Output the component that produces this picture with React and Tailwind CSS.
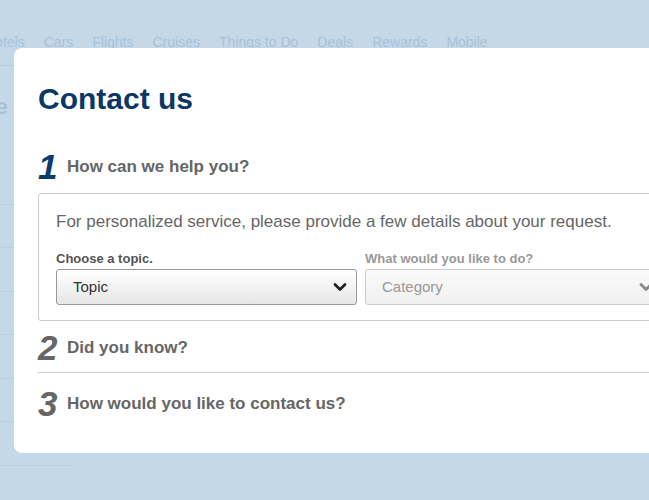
import React from 'react'

const navLinks = ['Hotels', 'Cars', 'Flights', 'Cruises', 'Things to Do', 'Deals', 'Rewards', 'Mobile']

const Chevron = ({ className }) => (
  <svg viewBox="0 0 14 10" className={className} fill="none">
    <path d="M2 2.5 L7 7.5 L12 2.5" stroke="currentColor" strokeWidth="2.8" strokeLinecap="round" strokeLinejoin="round" />
  </svg>
)

const Step = ({ num, title, active }) => (
  <div className="flex items-center h-[44px]">
    <span
      className={
        'w-[29px] italic font-bold text-[35px] leading-none ' +
        (active ? 'text-[#0c3a6b]' : 'text-[#666]')
      }
    >
      {num}
    </span>
    <span className="text-[17px] font-bold text-[#666] pt-[2px]">{title}</span>
  </div>
)

const App = () => {
  return (
    <div className="relative w-full h-[500px] overflow-hidden bg-[#c5d8e8] font-['Liberation_Sans',Arial,sans-serif]">
      {/* page behind the dialog */}
      <nav className="flex gap-[19px] pt-[32px] ml-[-15px] text-[14px] text-[#a6c2da]">
        {navLinks.map((l) => (
          <span key={l}>{l}</span>
        ))}
      </nav>
      <div className="mt-[12px] border-t border-[#b5cbdf]" />
      <div className="pt-[28px] text-[22px] font-bold leading-[26px] text-[#a6c2da] ml-[-18px]">Ve</div>
      <div className="mt-[41px] w-[20px]">
        {[0, 1, 2, 3, 4, 5].map((i) => (
          <div key={i} className="h-[43.5px] border-b border-[#b8cde0]" />
        ))}
      </div>
      <div className="mt-[43px] w-[72px] border-b border-[#b8cde0]" />

      {/* dialog */}
      <div className="absolute left-[14px] top-[48px] w-[680px] h-[405px] bg-white rounded-[8px] pl-[24px]">
        <h1 className="pt-[33px] text-[30px] font-bold text-[#0b3766] leading-[36px]">Contact us</h1>

        <div className="mt-[27px]">
          <Step num="1" title="How can we help you?" active />
        </div>

        <div className="mt-[5px] border border-[#ccc] rounded-[3px] pl-[17px] pt-[16px] pb-[15px]">
          <p className="text-[17px] text-[#666] leading-[24px]">
            For personalized service, please provide a few details about your request.
          </p>
          <div className="flex gap-[8px] mt-[16px]">
            <div className="w-[301px]">
              <div className="text-[13px] font-bold text-[#555] leading-[17px]">Choose a topic.</div>
              <div className="mt-[2px] h-[36px] flex items-center justify-between border border-[#999] rounded-[3px] bg-gradient-to-b from-white to-[#e6e6e6] pl-[16px] pr-[9px]">
                <span className="text-[15px] text-[#333]">Topic</span>
                <Chevron className="w-[14px] h-[10px] text-[#222]" />
              </div>
            </div>
            <div className="w-[298px]">
              <div className="text-[13px] font-bold text-[#999] leading-[17px]">What would you like to do?</div>
              <div className="mt-[2px] h-[36px] flex items-center justify-between border border-[#ccc] rounded-[3px] bg-gradient-to-b from-[#fafafa] to-[#f0f0f0] pl-[16px] pr-[9px]">
                <span className="text-[15px] text-[#999]">Category</span>
                <Chevron className="w-[14px] h-[10px] text-[#888]" />
              </div>
            </div>
          </div>
        </div>

        <div className="mt-[4px] border-b border-[#ccc] pb-[3px]">
          <Step num="2" title="Did you know?" />
        </div>
        <div className="mt-[8px]">
          <Step num="3" title="How would you like to contact us?" />
        </div>
      </div>
    </div>
  )
}

export default App
